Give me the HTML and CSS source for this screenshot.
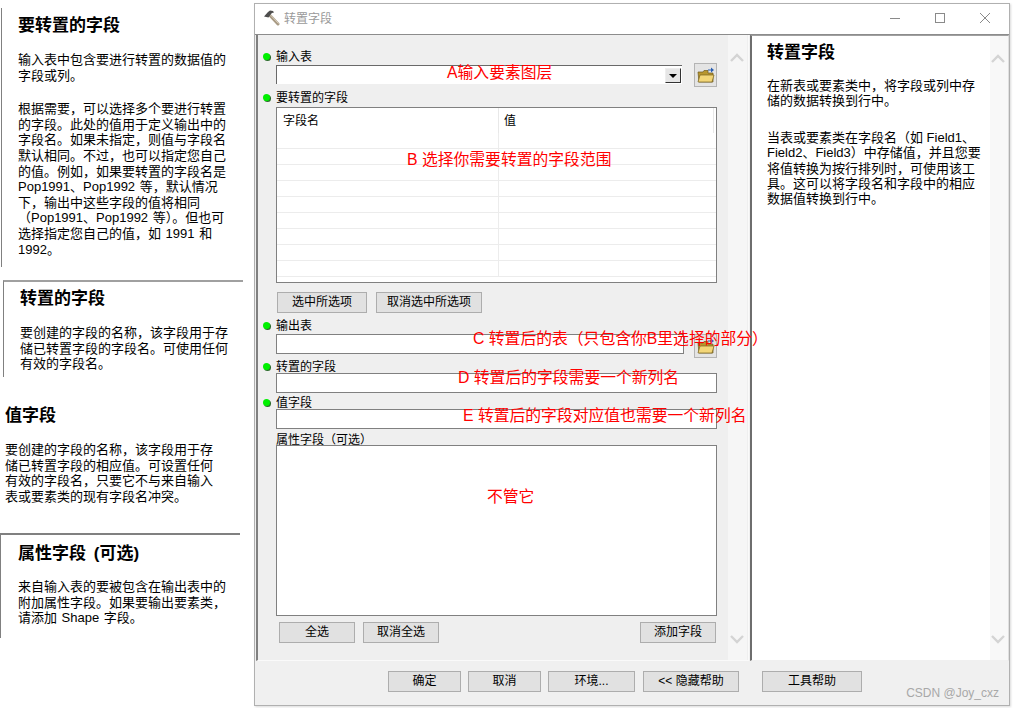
FILE: index.html
```html
<!DOCTYPE html>
<html lang="zh">
<head>
<meta charset="utf-8">
<title>转置字段</title>
<link rel="stylesheet" href="styles.css">
</head>
<body>
<div class="desk">
  <aside class="docs">
    <section class="doc doc-a">
      <h2>要转置的字段</h2>
      <p>输入表中包含要进行转置的数据值的<br>字段或列。</p>
      <p>根据需要，可以选择多个要进行转置<br>的字段。此处的值用于定义输出中的<br>字段名。如果未指定，则值与字段名<br>默认相同。不过，也可以指定您自己<br>的值。例如，如果要转置的字段名是<br>Pop1991、Pop1992 等，默认情况<br>下，输出中这些字段的值将相同<br>（Pop1991、Pop1992 等）。但也可<br>选择指定您自己的值，如 1991 和<br>1992。</p>
    </section>
    <section class="doc doc-b">
      <h2>转置的字段</h2>
      <p>要创建的字段的名称，该字段用于存<br>储已转置字段的字段名。可使用任何<br>有效的字段名。</p>
    </section>
    <section class="doc doc-c">
      <h2>值字段</h2>
      <p>要创建的字段的名称，该字段用于存<br>储已转置字段的相应值。可设置任何<br>有效的字段名，只要它不与来自输入<br>表或要素类的现有字段名冲突。</p>
    </section>
    <section class="doc doc-d">
      <h2>属性字段 (可选)</h2>
      <p>来自输入表的要被包含在输出表中的<br>附加属性字段。如果要输出要素类，<br>请添加 Shape 字段。</p>
    </section>
  </aside>

  <main class="window">
    <header class="titlebar">
      <svg class="hammer" width="17" height="17" viewBox="0 0 17 17">
        <path d="M7 6.5 15 15" stroke="#a89a84" stroke-width="3" stroke-linecap="round"/>
        <path d="M7.5 6 15.5 14.5" stroke="#d9cfbd" stroke-width="1"/>
        <path d="M1 7.5 5 3l2-1.500 3 .5 1 1.500-2 .5-1 1-2.500 3.500z" fill="#4e4e4e"/>
      </svg>
      <span class="title-text">转置字段</span>
      <div class="controls">
        <svg width="10" height="10" viewBox="0 0 10 10"><path d="M0 5.500h10" stroke="#8a8a8a"/></svg>
        <svg width="10" height="10" viewBox="0 0 10 10"><rect x=".5" y=".5" width="9" height="9" fill="none" stroke="#8a8a8a"/></svg>
        <svg width="10" height="10" viewBox="0 0 10 10"><path d="M0 0 10 10M10 0 0 10" stroke="#8a8a8a"/></svg>
      </div>
    </header>

    <div class="panes">
      <div class="form-pane">
        <form class="form">
          <label class="lbl req lbl-first">输入表</label>
          <div class="row row-combo">
            <div class="combo"><span class="arrow-btn"><i></i></span></div>
            <button type="button" class="folder-btn">
              <svg width="18" height="18" viewBox="0 0 18 18"><path d="M1 6h5l1-1.500h4V7h5v9H2z" fill="#b8962e" stroke="#6e5a1c" stroke-width=".7"/><path d="M3 9h14l-2 7H1z" fill="#f3d678" stroke="#7a6420" stroke-width=".7"/><path d="M11 3.500h3V1.500l3 2.500-3 2.500v-2h-3z" fill="#2b5fb0"/></svg>
            </button>
          </div>
          <label class="lbl req lbl-table">要转置的字段</label>
          <div class="table">
            <div class="thead"><span class="th th1">字段名</span><span class="th th2">值</span></div>
            <div class="tbody">
              <div class="tr"><i></i></div><div class="tr"><i></i></div><div class="tr"><i></i></div><div class="tr"><i></i></div><div class="tr"><i></i></div><div class="tr"><i></i></div><div class="tr"><i></i></div><div class="tr"><i></i></div><div class="tr"><i></i></div>
            </div>
          </div>
          <div class="btnrow btnrow-sel">
            <button type="button" class="btn w90">选中所选项</button>
            <button type="button" class="btn w106">取消选中所选项</button>
          </div>
          <label class="lbl req lbl-out">输出表</label>
          <div class="row row-out">
            <div class="input input-out"></div>
            <button type="button" class="folder-btn folder-out">
              <svg width="18" height="18" viewBox="0 0 18 18"><path d="M1 6h5l1-1.500h4V7h5v9H2z" fill="#b8962e" stroke="#6e5a1c" stroke-width=".7"/><path d="M3 9h14l-2 7H1z" fill="#f3d678" stroke="#7a6420" stroke-width=".7"/><path d="M11 3.500h3V1.500l3 2.500-3 2.500v-2h-3z" fill="#2b5fb0"/></svg>
            </button>
          </div>
          <label class="lbl req lbl-pivot">转置的字段</label>
          <div class="input tight"></div>
          <label class="lbl req lbl-value">值字段</label>
          <div class="input tight"></div>
          <label class="lbl lbl-attr">属性字段（可选）</label>
          <div class="textarea"></div>
          <div class="btnrow btnrow-all">
            <button type="button" class="btn w76">全选</button>
            <button type="button" class="btn w76">取消全选</button>
            <button type="button" class="btn w76 push">添加字段</button>
          </div>
        </form>
        <div class="scroll scroll-form">
          <svg width="14" height="9" viewBox="0 0 14 9"><path d="M1 8l6-6 6 6" fill="none" stroke="#d4d4d4" stroke-width="2.400"/></svg>
          <svg width="14" height="9" viewBox="0 0 14 9"><path d="M1 1l6 6 6-6" fill="none" stroke="#d4d4d4" stroke-width="2.400"/></svg>
        </div>
      </div>

      <div class="help-pane">
        <article class="help">
          <h2>转置字段</h2>
          <p>在新表或要素类中，将字段或列中存<br>储的数据转换到行中。</p>
          <p>当表或要素类在字段名（如 Field1、<br>Field2、Field3）中存储值，并且您要<br>将值转换为按行排列时，可使用该工<br>具。这可以将字段名和字段中的相应<br>数据值转换到行中。</p>
        </article>
        <div class="scroll scroll-help">
          <svg width="14" height="9" viewBox="0 0 14 9"><path d="M1 8l6-6 6 6" fill="none" stroke="#d4d4d4" stroke-width="2.400"/></svg>
          <svg width="14" height="9" viewBox="0 0 14 9"><path d="M1 1l6 6 6-6" fill="none" stroke="#d4d4d4" stroke-width="2.400"/></svg>
        </div>
      </div>
    </div>

    <footer class="footer">
      <button type="button" class="btn w73">确定</button>
      <button type="button" class="btn w73">取消</button>
      <button type="button" class="btn w87">环境...</button>
      <button type="button" class="btn w96">&lt;&lt; 隐藏帮助</button>
      <button type="button" class="btn w100">工具帮助</button>
    </footer>

    <span class="note note-a">A输入要素图层</span>
    <span class="note note-b">B 选择你需要转置的字段范围</span>
    <span class="note note-c">C 转置后的表（只包含你B里选择的部分）</span>
    <span class="note note-d">D 转置后的字段需要一个新列名</span>
    <span class="note note-e">E 转置后的字段对应值也需要一个新列名</span>
    <span class="note note-f">不管它</span>
    <span class="mark">CSDN @Joy_cxz</span>
  </main>
</div>
</body>
</html>
```
FILE: styles.css
```css
* { box-sizing: border-box; }
html, body { margin: 0; padding: 0; background: #fff; }
body {
  width: 1014px;
  height: 708px;
  overflow: hidden;
  font-family: "Liberation Sans", "Noto Sans CJK SC", sans-serif;
  color: #000;
}
.desk { display: flex; align-items: flex-start; height: 708px; }

/* Left documentation column */
.docs { width: 254px; flex: none; font-size: 13px; word-spacing: 1px; }
.doc h2 { margin: 0; font-size: 17px; line-height: 22px; font-weight: 700; word-spacing: 3px; }
.doc p { margin: 0; line-height: 15.6px; white-space: nowrap; }
.doc-a {
  margin: 8px 0 0 1px;
  height: 259px;
  padding: 7px 0 0 16px;
  border-left: 1px solid #808080;
}
.doc-a h2 + p { margin-top: 15px; }
.doc-a p + p { margin-top: 18px; }
.doc-b {
  margin: 13px 11px 0 3px;
  height: 97px;
  padding: 6px 0 0 16px;
  border-left: 1px solid #808080;
  border-top: 2px solid #a0a0a0;
}
.doc-b h2 + p { margin-top: 15px; }
.doc-c { margin-top: 28px; height: 116px; padding-left: 5px; }
.doc-c h2 + p { margin-top: 15px; }
.doc-d {
  margin: 12px 14px 0 0;
  height: 105px;
  padding: 8px 0 0 17px;
  border-left: 1px solid #808080;
  border-top: 2px solid #808080;
}
.doc-d h2 + p { margin-top: 14px; }

/* Dialog window */
.window {
  position: relative;
  width: 756px;
  height: 703px;
  margin-top: 3px;
  flex: none;
  display: flex;
  flex-direction: column;
  background: #f0f0f0;
  border: 1px solid #b0b0b0;
  box-shadow: 1px 1px 2px rgba(0, 0, 0, .15);
}
.titlebar {
  flex: none;
  height: 31px;
  display: flex;
  align-items: center;
  background: #fff;
  padding: 0 0 3px 8px;
  border-bottom: 1px solid #8c8c8c;
}
.hammer { margin-right: 4px; }
.title-text { font-size: 12px; color: #9a9a9a; }
.controls { margin-left: auto; display: flex; gap: 35px; margin-right: 19px; align-items: center; }
.controls svg { display: block; }

.panes { flex: none; height: 626px; display: flex; }
.form-pane {
  width: 493px;
  margin-left: 1px;
  flex: none;
  display: flex;
  background: #efefef;
  border-left: 2px solid #808080;
  border-bottom: 1px solid #fafafa;
  border-right: 1px solid #fafafa;
}
.form { flex: none; width: 470px; padding: 15px 0 0 18px; font-size: 12px; }
.scroll {
  flex: none;
  background: #f6f6f6;
  display: flex;
  flex-direction: column;
  justify-content: space-between;
  align-items: center;
  padding: 18px 2px 16px 0;
}
.scroll-form { width: 19px; }
.scroll-help { width: 18px; background: #f8f8f8; }

.lbl { display: block; position: relative; line-height: 14px; white-space: nowrap; }
.req::before {
  content: "";
  position: absolute;
  left: -13px;
  top: 3px;
  width: 7px;
  height: 7px;
  border-radius: 50%;
  background: #00f000;
  box-shadow: 1px 1px 0 #2a6a2a;
}
.lbl-table { margin-top: 7px; }
.lbl-out { margin-top: 6px; }
.lbl-pivot { margin-top: 6px; }
.lbl-value { margin-top: 3px; }
.lbl-attr { margin-top: 4px; }

.row { display: flex; align-items: flex-start; width: 441px; }
.row-combo { margin-top: 1px; height: 19px; }
.combo {
  width: 406px;
  height: 19px;
  background: #fff;
  border-top: 1px solid #696969;
  border-left: 1px solid #696969;
  display: flex;
  justify-content: flex-end;
  padding: 2px 0 0;
}
.arrow-btn {
  width: 16px;
  height: 15px;
  background: #e6e6e6;
  border: 1px solid #333;
  border-left-color: #eee;
  border-top-color: #eee;
  display: flex;
  align-items: center;
  justify-content: center;
  margin-right: 1px;
}
.arrow-btn i { width: 0; height: 0; border: 4px solid transparent; border-top: 4px solid #000; border-bottom: 0; }
.folder-btn {
  margin: -2px 0 0 auto;
  width: 23px;
  height: 24px;
  padding: 0;
  background: #e4e4e4;
  border: 1px solid #b4b4b4;
  display: flex;
  align-items: center;
  justify-content: center;
  flex: none;
}
.row-out { height: 20px; margin-top: 1px; }
.folder-out { margin-top: 0; position: relative; }

.table {
  width: 441px;
  height: 176px;
  margin-top: 2px;
  background: #fff;
  border: 1px solid #808080;
  overflow: hidden;
}
.thead { height: 25px; display: flex; font-size: 12px; line-height: 27px; }
.th { display: block; height: 25px; border-right: 1px solid #e8e8e8; padding-left: 6px; }
.th1 { width: 222px; }
.th2 { width: 215px; padding-left: 5px; }
.tr { height: 16px; border-bottom: 1px solid #ececec; position: relative; }
.tr i { position: absolute; left: 221px; top: 0; bottom: -1px; width: 1px; background: #ececec; }

.btn {
  height: 21px;
  padding: 0;
  background: #e1e1e1;
  border: 1px solid #adadad;
  font: 12px/19px "Liberation Sans", "Noto Sans CJK SC", sans-serif;
  color: #000;
  flex: none;
}
.w73 { width: 73px; }
.w76 { width: 76px; }
.w87 { width: 87px; }
.w90 { width: 90px; }
.w96 { width: 96px; }
.w100 { width: 100px; }
.w106 { width: 106px; }

.btnrow { display: flex; width: 441px; }
.btnrow-sel { margin-top: 9px; padding-left: 1px; gap: 9px; }
.btnrow-all { margin-top: 6px; padding-left: 3px; gap: 8px; }
.push { margin-left: auto; margin-right: 1px; }

.input {
  width: 441px;
  height: 20px;
  background: #fff;
  border: 1px solid #808080;
}
.tight { margin-top: -1px; }
.input-out { width: 408px; }
.textarea {
  width: 441px;
  height: 171px;
  margin-top: -2px;
  background: #fff;
  border: 1px solid #808080;
}

.help-pane {
  width: 259px;
  flex: none;
  margin-left: 1px;
  display: flex;
  background: #fff;
  border-left: 2px solid #6e6e6e;
  border-top: 1px solid #a0a0a0;
  border-right: 1px solid #e0e0e0;
  border-bottom: 1px solid #f0f0f0;
}
.help { flex: none; width: 238px; padding: 6px 0 0 15px; font-size: 13px; }
.help h2 { margin: 0; font-size: 17px; line-height: 22px; font-weight: 700; }
.help p { margin: 0; line-height: 15.4px; white-space: nowrap; }
.help h2 + p { margin-top: 14px; }
.help p + p { margin-top: 21px; }

.footer {
  flex: 1;
  display: flex;
  padding: 10px 0 0 133px;
  gap: 7px;
  background: #f0f0f0;
}
.footer .w96 { margin-left: 1px; }
.footer .w100 { margin-left: 16px; }

/* Red annotations painted over the dialog */
.note {
  position: absolute;
  color: #f00;
  font: 15.800px/20px "Liberation Sans", "Noto Sans CJK SC", sans-serif;
  white-space: nowrap;
}
.note-a { left: 192px; top: 59px; }
.note-b { left: 152px; top: 146px; }
.note-c { left: 218px; top: 325px; }
.note-d { left: 203px; top: 364px; }
.note-e { left: 208px; top: 402px; }
.note-f { left: 232px; top: 483px; }
.mark {
  position: absolute;
  right: 10px;
  bottom: 5px;
  color: #a8a8a8;
  font: 12px/14px "Liberation Sans", sans-serif;
}
```
